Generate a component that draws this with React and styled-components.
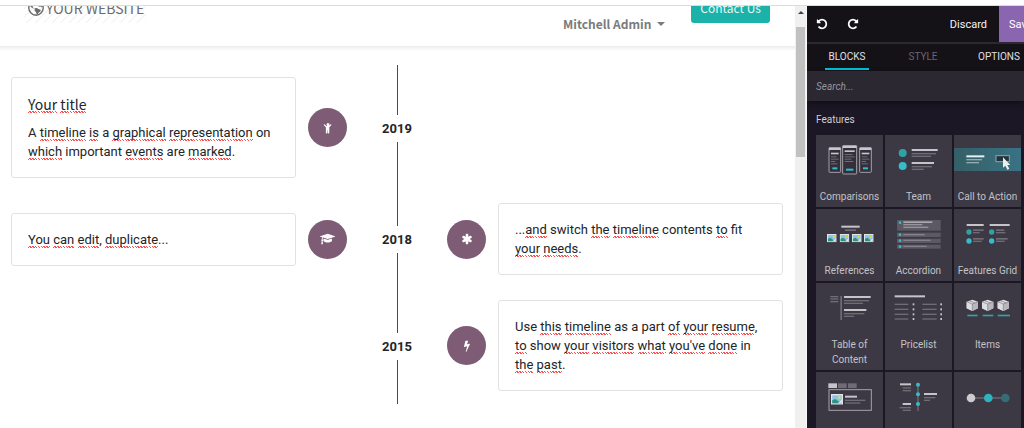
import React, { useState } from "react";
import styled, { createGlobalStyle } from "styled-components";

const GlobalStyle = createGlobalStyle`
  * {
    box-sizing: border-box;
  }
  body {
    margin: 0;
    background-color: #fff;
    font-family: Roboto, "Liberation Sans", sans-serif;
    color: #212529;
    overflow: hidden;
  }
  button,
  input {
    font-family: inherit;
  }
`;

const Page = styled.div`
  display: flex;
  flex-direction: column;
  height: 100vh;
  padding-top: 5px;
`;
const Editor = styled.div`
  display: flex;
  flex: 1;
  min-height: 0;
  border-top: solid 1px #dcdcde;
`;
const Website = styled.main`
  flex: 1;
  min-width: 0;
  overflow: hidden;
`;

// website header
const Header = styled.header`
  display: flex;
  align-items: flex-end;
  height: 40px;
  padding: 0 25px 0 24px;
  overflow: hidden;
  font-family: "Noto Sans CJK SC", "Noto Sans", sans-serif;
  color: #737373;
`;
const HeaderShadow = styled.div`
  height: 5px;
  background: linear-gradient(#ececec, #fff);
`;
const Logo = styled.a`
  display: flex;
  align-items: center;
  gap: 2px;
  height: 30px;
  margin: 0 auto 23px 0;
  padding: 0 2px 0 4px;
  background: repeating-linear-gradient(
    135deg,
    #fff 0 4px,
    #f1f1f1 5px,
    #fff 6px
  );
  color: #6c6c6c;
  font-size: 14px;
  line-height: 20px;
  text-decoration: none;
`;
const UserButton = styled.button`
  display: flex;
  align-items: center;
  gap: 6px;
  margin: 0 26px 12px 0;
  padding: 0;
  border: none;
  background: none;
  color: #7b7b7b;
  font-size: 12px;
  font-weight: 700;
  line-height: 20px;
`;
const Caret = styled.span`
  border: solid 4px transparent;
  border-top-color: currentColor;
  border-bottom: none;
`;
const ContactButton = styled.button`
  height: 30px;
  margin-bottom: 23px;
  padding: 0 9px;
  border: none;
  border-radius: 3px;
  background-color: #1bb2a9;
  color: #e9f7f6;
  font-size: 12px;
  line-height: 20px;
`;

// timeline
const TimelineSection = styled.section`
  padding: 14px 12px 0 11px;
`;
const TimelineRow = styled.div`
  display: grid;
  grid-template-columns: minmax(0, 1fr) 100px minmax(0, 1fr);
`;
const Side = styled.div`
  display: flex;
  flex-direction: ${(props) => (props.$right ? "row-reverse" : "row")};
  align-items: center;
  gap: 12px;
  padding: 12px 0 13px;
`;
const EventCard = styled.div`
  flex: 1;
  padding: 16px;
  border: solid 1px #e1e2e3;
  border-radius: 3px;
  font-size: 13px;
  line-height: 19px;
`;
const EventTitle = styled.h4`
  margin: 0 0 8px;
  font-family: "Noto Sans CJK SC", "Noto Sans", sans-serif;
  font-size: 14px;
  font-weight: 400;
  line-height: 21px;
`;
const EventText = styled.p`
  margin: 0;
`;
const Misspelled = styled.span`
  padding-bottom: 1px;
  background: repeating-linear-gradient(45deg, #ff4d4d 0 1px, #fff 1px 2px)
    left bottom / 100% 2px no-repeat;

  ${EventTitle} & {
    background-position: left calc(100% - 2px);
  }
`;
const Bullet = styled.div`
  display: flex;
  justify-content: center;
  align-items: center;
  width: 39px;
  height: 39px;
  border-radius: 50%;
  background-color: #7f5c76;
  color: white;
`;
const YearColumn = styled.div`
  display: flex;
  flex-direction: column;
  align-items: center;

  &::before,
  &::after {
    content: "";
    flex: 1;
    width: 1px;
    background-color: #4a4c52;
  }
`;
const Year = styled.b`
  font-size: 13px;
  line-height: 27px;
`;

// scrollbar
const ScrollTrack = styled.div`
  display: flex;
  flex-direction: column;
  align-items: center;
  width: 12px;
  padding-top: 5px;
  border-right: solid 1px #f8f8f8;
  background-color: #f0f0f0;
`;
const ScrollArrow = styled.div`
  border: solid 3px transparent;
  border-top: none;
  border-bottom-color: #404040;
`;
const ScrollThumb = styled.div`
  width: 9px;
  height: 130px;
  margin-top: 13px;
  background-color: #c1c1c1;
`;

// side panel
const Panel = styled.aside`
  flex: 0 0 217px;
  min-width: 0;
  overflow: hidden;
  background-color: #1b1725;
  color: #d4d3d6;
`;
const Toolbar = styled.div`
  display: flex;
  align-items: center;
  gap: 2px;
  height: 36px;
  background-color: #141117;
`;
const IconButton = styled.button`
  display: flex;
  justify-content: center;
  width: 29px;
  padding: 0;
  border: none;
  background: none;
  color: white;
`;
const DiscardButton = styled.button`
  margin-left: auto;
  padding: 0 10px;
  border: none;
  background: none;
  color: #f4f4f4;
  font-size: 11px;
`;
const SaveSlot = styled.div`
  width: 25px;
  height: 36px;
  overflow: hidden;
`;
const SaveButton = styled.button`
  height: 36px;
  padding: 0 10px;
  border: none;
  background-color: #8b66b0;
  color: white;
  font-size: 11px;
`;
const Tabs = styled.div`
  display: flex;
  height: 29px;
  padding-left: 2px;
  border-top: solid 2px #2b2831;
  background-color: #141117;
`;
const Tab = styled.button`
  display: flex;
  flex: 0 0 76px;
  justify-content: center;
  padding: 0;
  border: none;
  background: none;
  color: ${(props) => (props.disabled ? "#6a686d" : "#e0e0e2")};
  font-size: 10px;
  line-height: 26px;

  > span {
    height: 26px;
    padding: 0 4px;
    border-bottom: solid 2px
      ${(props) => (props.$active ? "#01bad2" : "transparent")};
  }
`;
const SearchInput = styled.input`
  display: block;
  width: 100%;
  height: 30px;
  padding: 0 9px;
  border: none;
  outline: none;
  background-color: #2c2832;
  box-shadow: 0 2px 5px #100d16;
  color: white;
  font-size: 10px;

  &::placeholder {
    color: #98969c;
    font-style: italic;
  }
`;
const BlockSection = styled.section`
  padding: 11px 3px 0 9px;
`;
const SectionTitle = styled.h5`
  margin: 0 0 7px;
  color: #d0cfd3;
  font-size: 10px;
  font-weight: 400;
  line-height: 16px;
`;
const BlockGrid = styled.div`
  display: grid;
  grid-template-columns: repeat(3, minmax(0, 1fr));
  gap: 2px;
`;
const BlockTile = styled.button`
  display: flex;
  flex-direction: column;
  align-items: center;
  min-height: 72px;
  padding: 0 3px 3px;
  border: none;
  background-color: #3d3944;
  color: #c3c2c6;
  font-size: 10px;
  line-height: 15px;

  > svg {
    display: block;
    align-self: stretch;
    flex-shrink: 0;
    height: 54px;
    margin: 0 -3px;
  }
`;

const FA_PATHS = {
  child:
    "M1380 493l-292 292v824q0 46-33 79t-79 33-79-33-33-79v-384h-64v384q0 46-33 79t-79 33-79-33-33-79v-824l-292-292q-28-28-28-68t28-68q29-28 68.5-28t67.5 28l228 228h368l228-228q28-28 68-28t68 28q28 29 28 68.5t-28 67.5zm-260-109q0 93-65.5 158.5t-158.5 65.5-158.5-65.5-65.5-158.5 65.5-158.5 158.5-65.5 158.5 65.5 65.5 158.5z",
  cap: "M1774 836l18 316q4 69-82 128t-235 93.5-323 34.5-323-34.5-235-93.5-82-128l18-316 574 181q22 7 48 7t48-7zm530-324q0 23-22 31l-1120 352q-4 1-10 1t-10-1l-652-206q-43 34-71 111.5t-34 178.5q63 36 63 109 0 69-58 107l58 433q2 14-8 25-9 11-24 11h-192q-15 0-24-11-10-11-8-25l58-433q-58-38-58-107 0-73 65-111 11-207 98-330l-333-104q-22-8-22-31t22-31l1120-352q4-1 10-1t10 1l1120 352q22 8 22 31z",
  asterisk:
    "M1546 1050q46 26 59.5 77.5t-12.5 97.5l-64 110q-26 46-77.5 59.5t-97.5-12.5l-266-153v307q0 52-38 90t-90 38h-128q-52 0-90-38t-38-90v-307l-266 153q-46 26-97.5 12.5t-77.5-59.5l-64-110q-26-46-12.5-97.5t59.5-77.5l266-154-266-154q-46-26-59.5-77.5t12.5-97.5l64-110q26-46 77.5-59.5t97.5 12.5l266 153v-307q0-52 38-90t90-38h128q52 0 90 38t38 90v307l266-153q46-26 97.5-12.5t77.5 59.5l64 110q26 46 12.5 97.5t-59.5 77.5l-266 154z",
  bolt: "M1333 566q18 20 7 44l-540 1157q-13 25-42 25-4 0-14-2-17-5-25.5-19t-4.5-30l197-808-406 101q-4 1-12 1-18 0-31-11-18-15-13-39l201-825q4-14 16-23t28-9h328q19 0 32 12.5t13 29.5q0 8-5 18l-171 463 396-98q8-2 12-2 19 0 34 15z",
  repeat:
    "M1664 256v448q0 26-19 45t-45 19h-448q-42 0-59-40-17-39 14-69l138-138q-148-137-349-137-104 0-198.5 40.5t-163.5 109.5-109.5 163.5-40.5 198.5 40.5 198.5 109.5 163.5 163.5 109.5 198.5 40.5q119 0 225-52t179-147q7-10 23-12 15 0 25 9l137 138q9 8 9.5 20.5t-7.5 22.5q-109 132-264 204.5t-327 72.5q-156 0-298-61t-245-164-164-245-61-298 61-298 164-245 245-164 298-61q147 0 284.5 55.5t244.5 156.5l130-129q29-31 70-14 39 17 39 59z",
};

const Icon = ({ name, size = 12, mirrored }) => {
  const boxWidth = name === "cap" ? 2304 : 1792;
  return (
    <svg
      width={(size * boxWidth) / 1792}
      height={size}
      viewBox={`0 0 ${boxWidth} 1792`}
      fill="currentColor"
      aria-hidden="true"
    >
      <path
        d={FA_PATHS[name]}
        transform={mirrored ? "translate(1792 0) scale(-1 1)" : undefined}
      />
    </svg>
  );
};

const GlobeIcon = () => (
  <svg width="16" height="16" viewBox="0 0 16 16" aria-hidden="true">
    <circle cx="8" cy="8" r="7.200" fill="none" stroke="currentColor" strokeWidth="1.400" />
    <path
      d="M1.500 5L4 2l3.500-.5-.8 2 1 .8-1.900 1.500-1.200.6.2 1 1 .8-.6.3-2-1.300z"
      fill="currentColor"
    />
    <path
      d="M6.500 8.200l2.200-.2 2.400 1.300 1.700.6-.6 1.900-1.700 1-.7 1.700-1.100.3-.5-2.400-1.500-1.700z"
      fill="currentColor"
    />
    <path d="M10 1.500l3 2 1.500 3-.7.800-1.300-.8-1.700.2-.9-1.500 1-1.400-1.300-.8z" fill="currentColor" />
  </svg>
);

// Words wrapped in underscores get the spell checker underline.
const renderText = (text) =>
  text
    .split("_")
    .map((part, i) => (i % 2 ? <Misspelled key={i}>{part}</Misspelled> : part));

const EVENTS = [
  {
    year: "2019",
    left: {
      icon: "child",
      title: "_Your_ _title_",
      text: "A _timeline_ _is_ a _graphical_ _representation_ on _which_ important _events_ are _marked_.",
    },
  },
  {
    year: "2018",
    left: { icon: "cap", text: "_You_ _can_ _edit_, _duplicate_..." },
    right: {
      icon: "asterisk",
      text: "..._and_ switch _the_ _timeline_ contents _to_ fit _your_ _needs_.",
    },
  },
  {
    year: "2015",
    right: {
      icon: "bolt",
      text: "Use _this_ _timeline_ as a part _of_ _your_ _resume_, _to_ show _your_ _visitors_ _what_ _you've_ _done_ in _the_ _past_.",
    },
  },
];

const TimelineEvent = ({ event, right }) => (
  <Side $right={right}>
    {event && (
      <>
        <EventCard>
          {event.title && <EventTitle>{renderText(event.title)}</EventTitle>}
          <EventText>{renderText(event.text)}</EventText>
        </EventCard>
        <Bullet>
          <Icon name={event.icon} />
        </Bullet>
      </>
    )}
  </Side>
);

const LIGHT = "#c6c4c9";
const DIM = "#6f6c75";
const TEAL = "#2fa3a3";
const CYAN = "#35bccb";

// Each bar is [x, y, width, height, color]
const Bars = ({ items }) =>
  items.map(([x, y, width, height, fill = DIM], i) => (
    <rect key={i} x={x} y={y} width={width} height={height} fill={fill} />
  ));

const Thumb = ({ children }) => (
  <svg viewBox="0 0 201 159" preserveAspectRatio="xMidYMin meet" aria-hidden="true">
    {children}
  </svg>
);

const Photo = ({ x, y, w, h }) => (
  <svg x={x} y={y} width={w} height={h} viewBox="0 0 30 24" preserveAspectRatio="none">
    <rect width="30" height="24" fill="#dfe6e8" />
    <rect x="3" y="3" width="24" height="18" fill="#8fc3e3" />
    <path d="M3 14l8-3 8 6 8 1v3H3z" fill="#2e9184" />
    <path d="M17 21l10-8v8z" fill="#dfe9ea" />
    <circle cx="21" cy="8" r="3" fill="#e8e337" />
  </svg>
);

const PriceTable = ({ x, h, w, y, height, barTop }) => (
  <>
    <rect x={x} y={y} width={w} height={height} rx="2" fill="#34303b" stroke="#a3a1a7" strokeWidth="3" />
    <rect x={x} y={y} width={w} height="7" fill="#c9c7cb" />
    <Bars
      items={[
        [x + 6, barTop, w - 12, 5, LIGHT],
        [x + 6, barTop + 11, w - 18, 3],
        [x + 6, barTop + 18, w - 12, 3],
        [x + 6, barTop + 25, w - 22, 3],
        [x + 6, barTop + 32, w - 16, 3],
        [x + 10, h, w - 20, 6, CYAN],
      ]}
    />
  </>
);

const Cube = ({ x }) => (
  <g transform={`translate(${x} 50)`}>
    <path d="M17 0l17 6v20l-17 8-17-8V6z" fill="#e2e1e3" />
    <path d="M17 13l17-7v20l-17 8z" fill="#b9b7bc" />
    <path d="M0 6l17 7v21L0 26z" fill="#dddce0" />
    <path d="M0 6l17 7 17-7M17 13v21M8 3l17 7" fill="none" stroke="#77747d" strokeWidth="2" />
  </g>
);

const THUMBS = {
  comparisons: (
    <>
      <PriceTable x={39} y={38} w={35} height={74} barTop={53} h={97} />
      <PriceTable x={80} y={32} w={42} height={85} barTop={46} h={101} />
      <PriceTable x={131} y={38} w={35} height={74} barTop={53} h={97} />
    </>
  ),
  team: (
    <>
      <circle cx="53" cy="54" r="12" fill={TEAL} />
      <circle cx="53" cy="93" r="12" fill={CYAN} />
      <Bars
        items={[
          [80, 42, 78, 6, LIGHT],
          [80, 54, 73, 4],
          [80, 62, 58, 4],
          [80, 81, 67, 6, LIGHT],
          [80, 93, 61, 4],
          [80, 101, 36, 4],
        ]}
      />
    </>
  ),
  cta: (
    <>
      <defs>
        <linearGradient id="ctaBand">
          <stop offset="0" stopColor="#345f66" />
          <stop offset="1" stopColor="#3a7284" />
        </linearGradient>
      </defs>
      <rect y="39" width="201" height="69" fill="url(#ctaBand)" />
      <Bars
        items={[
          [37, 61, 54, 6, "#e8eeee"],
          [37, 72, 47, 4, "#93acb0"],
          [37, 81, 38, 4, "#93acb0"],
        ]}
      />
      <rect x="126" y="62" width="40" height="18" fill="#22343b" stroke="#91a5aa" strokeWidth="3" />
      <path d="M147 67v31l7-6 6 12 6-3-6-11h9z" fill="#eceeef" />
    </>
  ),
  references: (
    <>
      <Bars
        items={[
          [76, 50, 55, 6, LIGHT],
          [87, 61, 33, 5],
        ]}
      />
      {[33, 71, 108, 144].map((x) => (
        <Photo key={x} x={x} y={75} w={29} h={25} />
      ))}
    </>
  ),
  accordion: (
    <>
      <Bars
        items={[
          [36, 33, 131, 32, "#5c5964"],
          [36, 71, 131, 13, "#5c5964"],
          [36, 89, 131, 13, "#5c5964"],
          [36, 107, 131, 12, "#5c5964"],
          [55, 37, 87, 5, "#aaa8ae"],
          [55, 45, 57, 4, "#96939b"],
          [55, 53, 75, 4, "#96939b"],
          [55, 75, 64, 4, "#85828b"],
          [55, 92, 82, 4, "#85828b"],
          [55, 110, 70, 4, "#85828b"],
        ]}
      />
      {[41, 77, 95, 113].map((y) => (
        <circle key={y} cx="45" cy={y} r="4" fill={CYAN} />
      ))}
    </>
  ),
  grid: (
    <>
      <Bars
        items={[
          [38, 45, 51, 6, LIGHT],
          [107, 45, 60, 6, LIGHT],
          [57, 61, 32, 5],
          [57, 69, 20, 4],
          [126, 61, 25, 5],
          [126, 69, 28, 4],
          [57, 87, 32, 5],
          [57, 95, 26, 4],
          [126, 87, 35, 5],
          [126, 95, 26, 4],
        ]}
      />
      <circle cx="45" cy="69" r="8" fill={TEAL} />
      <circle cx="113" cy="69" r="8" fill={TEAL} />
      <circle cx="45" cy="96" r="8" fill={CYAN} />
      <circle cx="113" cy="96" r="8" fill={CYAN} />
    </>
  ),
  toc: (
    <Bars
      items={[
        [43, 39, 24, 4],
        [43, 46, 24, 4],
        [43, 54, 24, 4],
        [73, 39, 5, 72],
        [84, 39, 80, 6, LIGHT],
        [84, 51, 75, 4],
        [84, 59, 57, 4],
        [84, 78, 67, 6, LIGHT],
        [84, 90, 61, 4],
        [84, 98, 30, 4],
      ]}
    />
  ),
  pricelist: (
    <>
      <Bars items={[[29, 37, 91, 6, LIGHT]]} />
      {[62, 77, 92, 106].map((y) => (
        <Bars
          key={y}
          items={[
            [29, y, 41, 4],
            [83, y - 1, 5, 6, LIGHT],
            [112, y, 43, 4],
            [166, y - 1, 5, 6, LIGHT],
          ]}
        />
      ))}
    </>
  ),
  items: (
    <>
      <Cube x={38} />
      <Cube x={84} />
      <Cube x={131} />
      <Bars
        items={[
          [40, 95, 31, 5, TEAL],
          [86, 95, 32, 5, TEAL],
          [131, 95, 37, 5, TEAL],
        ]}
      />
    </>
  ),
  tabs: (
    <>
      <Bars
        items={[
          [37, 34, 26, 14, LIGHT],
          [66, 34, 26, 14],
          [96, 34, 26, 14],
        ]}
      />
      <rect x="39" y="53" width="127" height="62" fill="none" stroke="#a4a2a8" strokeWidth="3" />
      <Photo x={45} y={66} w={36} h={32} />
      <Bars
        items={[
          [87, 71, 36, 6, LIGHT],
          [87, 83, 61, 4],
          [87, 91, 46, 4],
        ]}
      />
    </>
  ),
  timeline: (
    <>
      <Bars
        items={[
          [97, 32, 4, 85],
          [45, 34, 33, 6, LIGHT],
          [53, 46, 25, 4],
          [53, 54, 25, 4],
          [117, 63, 39, 6, LIGHT],
          [117, 75, 34, 4],
          [117, 83, 18, 4],
          [53, 93, 25, 6, LIGHT],
          [44, 105, 34, 4],
          [53, 113, 25, 4],
        ]}
      />
      {[38, 67, 96].map((y) => (
        <circle key={y} cx="99" cy={y} r="6" fill={CYAN} />
      ))}
    </>
  ),
  steps: (
    <>
      <Bars items={[[50, 76, 104, 4]]} />
      <circle cx="51" cy="78" r="13" fill="#cccace" />
      <circle cx="103" cy="78" r="13" fill="#2fb3be" />
      <circle cx="154" cy="78" r="13" fill="#356c78" />
    </>
  ),
};

const BLOCKS = [
  { id: "comparisons", label: "Comparisons" },
  { id: "team", label: "Team" },
  { id: "cta", label: "Call to Action" },
  { id: "references", label: "References" },
  { id: "accordion", label: "Accordion" },
  { id: "grid", label: "Features Grid" },
  { id: "toc", label: "Table of Content" },
  { id: "pricelist", label: "Pricelist" },
  { id: "items", label: "Items" },
  { id: "tabs" },
  { id: "timeline" },
  { id: "steps" },
];

const SidePanel = () => {
  const [activeTab, setActiveTab] = useState("BLOCKS");
  const [search, setSearch] = useState("");
  return (
    <Panel>
      <Toolbar>
        <IconButton aria-label="Undo">
          <Icon name="repeat" mirrored />
        </IconButton>
        <IconButton aria-label="Redo">
          <Icon name="repeat" />
        </IconButton>
        <DiscardButton>Discard</DiscardButton>
        <SaveSlot>
          <SaveButton>Save</SaveButton>
        </SaveSlot>
      </Toolbar>
      <Tabs>
        {["BLOCKS", "STYLE", "OPTIONS"].map((tab) => (
          <Tab
            key={tab}
            $active={tab === activeTab}
            disabled={tab === "STYLE"}
            onClick={() => setActiveTab(tab)}
          >
            <span>{tab}</span>
          </Tab>
        ))}
      </Tabs>
      <SearchInput
        aria-label="Search blocks"
        placeholder="Search..."
        value={search}
        onChange={(e) => setSearch(e.target.value)}
      />
      <BlockSection>
        <SectionTitle>Features</SectionTitle>
        <BlockGrid>
          {BLOCKS.map(({ id, label }) => (
            <BlockTile key={id} aria-label={label || id}>
              <Thumb>{THUMBS[id]}</Thumb>
              {label}
            </BlockTile>
          ))}
        </BlockGrid>
      </BlockSection>
    </Panel>
  );
};

const App = () => (
  <>
    <GlobalStyle />
    <Page>
      <Editor>
        <Website>
          <Header>
            <Logo href="#">
              <GlobeIcon />
              YOUR WEBSITE
            </Logo>
            <UserButton>
              Mitchell Admin <Caret />
            </UserButton>
            <ContactButton>Contact Us</ContactButton>
          </Header>
          <HeaderShadow />
          <TimelineSection>
            {EVENTS.map(({ year, left, right }) => (
              <TimelineRow key={year}>
                <TimelineEvent event={left} />
                <YearColumn>
                  <Year>{year}</Year>
                </YearColumn>
                <TimelineEvent event={right} right />
              </TimelineRow>
            ))}
          </TimelineSection>
        </Website>
        <ScrollTrack>
          <ScrollArrow />
          <ScrollThumb />
        </ScrollTrack>
        <SidePanel />
      </Editor>
    </Page>
  </>
);

export default App;
